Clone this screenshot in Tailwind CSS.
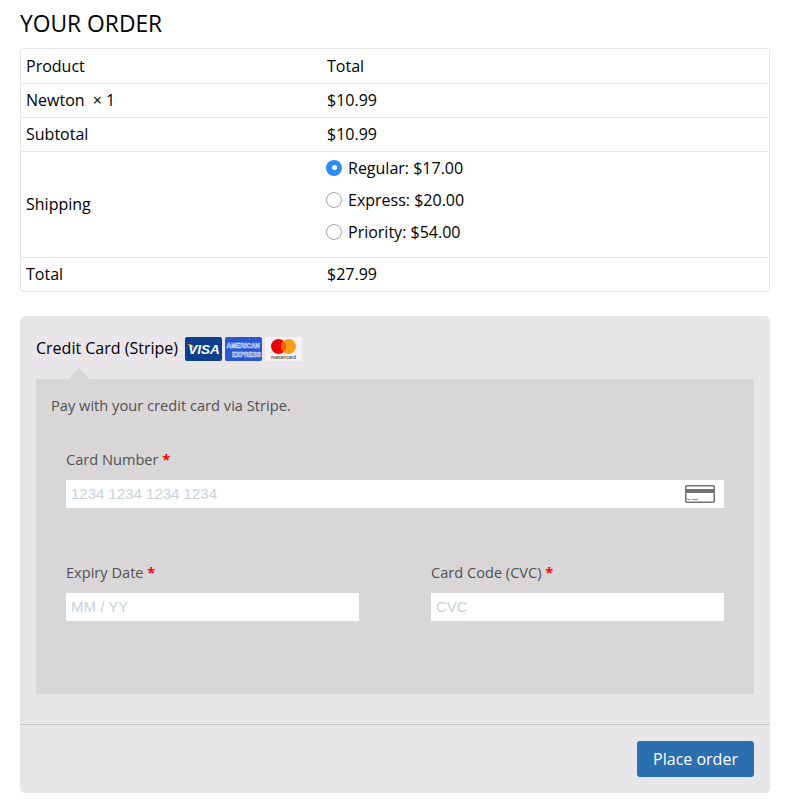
<!DOCTYPE html>
<html lang="en">
<head>
    <meta charset="UTF-8">
    <meta name="viewport" content="width=device-width, initial-scale=1.0">
    <title>Your order</title>
    <script src="https://cdn.jsdelivr.net/npm/@tailwindcss/browser@4"></script>
</head>
<body class="bg-white font-['Open_Sans',sans-serif] text-black">
    <div class="w-[750px] ml-[20px]">
        <h3 class="pt-[9px] h-[48px] text-[22.8px] leading-[30px] text-black">YOUR ORDER</h3>

        <div class="border border-[#e6e6e6] rounded-[3px] text-[16px] leading-[22px]">
            <div class="flex h-[35px] items-center border-b border-[#e6e6e6]">
                <div class="w-[301px] pl-[5px]">Product</div>
                <div class="pl-[5px]">Total</div>
            </div>
            <div class="flex h-[34px] pb-[2px] items-center border-b border-[#e6e6e6]">
                <div class="w-[301px] pl-[5px]">Newton <span class="ml-[4px]">× 1</span></div>
                <div class="pl-[5px]">$10.99</div>
            </div>
            <div class="flex h-[34px] pb-[2px] items-center border-b border-[#e6e6e6]">
                <div class="w-[301px] pl-[5px]">Subtotal</div>
                <div class="pl-[5px]">$10.99</div>
            </div>
            <div class="flex h-[106px] pb-[2px] items-center border-b border-[#e6e6e6]">
                <div class="w-[301px] pl-[5px]">Shipping</div>
                <div class="pl-[4px] pb-[8px] flex flex-col gap-[10px]">
                    <div class="flex items-center gap-[6px]">
                        <span class="w-[16px] h-[16px] rounded-full bg-[#2f8bf5] flex items-center justify-center"><span class="w-[5px] h-[5px] rounded-full bg-white"></span></span>
                        <span>Regular: $17.00</span>
                    </div>
                    <div class="flex items-center gap-[6px]">
                        <span class="w-[16px] h-[16px] rounded-full bg-white border border-[#a3a3a3]"></span>
                        <span>Express: $20.00</span>
                    </div>
                    <div class="flex items-center gap-[6px]">
                        <span class="w-[16px] h-[16px] rounded-full bg-white border border-[#a3a3a3]"></span>
                        <span>Priority: $54.00</span>
                    </div>
                </div>
            </div>
            <div class="flex h-[33px] pb-[2px] items-center">
                <div class="w-[301px] pl-[5px]">Total</div>
                <div class="pl-[5px]">$27.99</div>
            </div>
        </div>

        <div class="mt-[24px] h-[477px] bg-[#e9e6ea] rounded-[5px]">
            <div class="h-[63px] px-[16px] pt-[19px] flex items-start gap-[7px]">
                <span class="text-[16px] leading-[26px]">Credit Card (Stripe)</span>
                <svg class="mt-[2px]" width="37" height="24" viewBox="0 0 37 24">
                    <rect width="37" height="24" rx="2" fill="#0e3f8f"/>
                    <path d="M2 7 Q8 6.5 10 12 Q7 9 2 7Z" fill="#e8a33d"/>
                    <text x="19" y="16.5" text-anchor="middle" font-family="Liberation Sans" font-size="13.5" font-weight="700" font-style="italic" fill="#fff">VISA</text>
                </svg>
                <svg class="mt-[2px] -ml-[4px]" width="37" height="24" viewBox="0 0 37 24">
                    <rect width="37" height="24" rx="2" fill="#2a57d0"/>
                    <text x="1.5" y="9" transform="scale(1,1.2)" font-family="Liberation Sans" font-size="6.2" font-weight="700" fill="#2a57d0" stroke="#e6ecfc" stroke-width="0.45">AMERICAN</text>
                    <text x="7" y="16.5" transform="scale(1,1.2)" font-family="Liberation Sans" font-size="6.2" font-weight="700" fill="#2a57d0" stroke="#e6ecfc" stroke-width="0.45">EXPRESS</text>
                </svg>
                <svg class="mt-[2px] -ml-[4px]" width="37" height="24" viewBox="0 0 37 24">
                    <rect width="37" height="24" rx="2" fill="#f4f2f3"/>
                    <circle cx="13.5" cy="9.5" r="7.5" fill="#e8000b"/>
                    <circle cx="23.5" cy="9.5" r="7.5" fill="#f79e1b"/>
                    <path d="M18.5 3.9 A7.5 7.5 0 0 1 18.5 15.1 A7.5 7.5 0 0 1 18.5 3.9Z" fill="#ff5f00"/>
                    <text x="18.5" y="22" text-anchor="middle" font-family="Liberation Sans" font-size="5" fill="#231f20">mastercard</text>
                </svg>
            </div>

            <div class="relative mx-[16px] h-[315px] bg-[#d9d6d8] rounded-[2px] pt-[14px]">
                <div class="absolute left-[32px] -top-[11px] w-0 h-0 border-l-[11px] border-r-[11px] border-b-[11px] border-l-transparent border-r-transparent border-b-[#d9d6d8]"></div>
                <p class="pl-[15px] text-[14.65px] leading-[24px] text-[#515151]">Pay with your credit card via Stripe.</p>

                <div class="px-[30px] mt-[30px]">
                    <div class="text-[14.6px] leading-[24px] text-[#515151]">Card Number <span class="text-[#ff0000] font-bold">*</span></div>
                    <div class="mt-[9px] h-[28px] bg-white flex items-center justify-between pl-[5px] pr-[9px]">
                        <span class="font-['Liberation_Sans',sans-serif] text-[15px] text-[#c9d1dd]">1234 1234 1234 1234</span>
                        <svg width="30" height="18" viewBox="0 0 30 18">
                            <rect x="0.75" y="0.75" width="28.5" height="16.5" rx="1" fill="#fff" stroke="#6f7174" stroke-width="1.5"/>
                            <rect x="1" y="4" width="28" height="4" fill="#6f7174"/>
                            <rect x="2" y="14" width="3.5" height="1" fill="#8a8c8f"/>
                            <rect x="7" y="14" width="6" height="1" fill="#8a8c8f"/>
                        </svg>
                    </div>

                    <div class="mt-[52px] flex gap-[72px]">
                        <div class="w-[293px]">
                            <div class="text-[14.6px] leading-[24px] text-[#515151]">Expiry Date <span class="text-[#ff0000] font-bold">*</span></div>
                            <div class="mt-[9px] h-[28px] bg-white flex items-center pl-[5px]">
                                <span class="font-['Liberation_Sans',sans-serif] text-[15px] text-[#c9d1dd]">MM / YY</span>
                            </div>
                        </div>
                        <div class="w-[293px]">
                            <div class="text-[14.6px] leading-[24px] text-[#515151]">Card Code (CVC) <span class="text-[#ff0000] font-bold">*</span></div>
                            <div class="mt-[9px] h-[28px] bg-white flex items-center pl-[5px]">
                                <span class="font-['Liberation_Sans',sans-serif] text-[15px] text-[#c9d1dd]">CVC</span>
                            </div>
                        </div>
                    </div>
                </div>
            </div>

            <div class="mt-[30px] border-t border-[#c9c7ca] flex justify-end pt-[16px] pr-[16px]">
                <button class="w-[117px] h-[36px] bg-[#2b6fae] rounded-[3px] text-white text-[16px]">Place order</button>
            </div>
        </div>
    </div>
</body>
</html>
